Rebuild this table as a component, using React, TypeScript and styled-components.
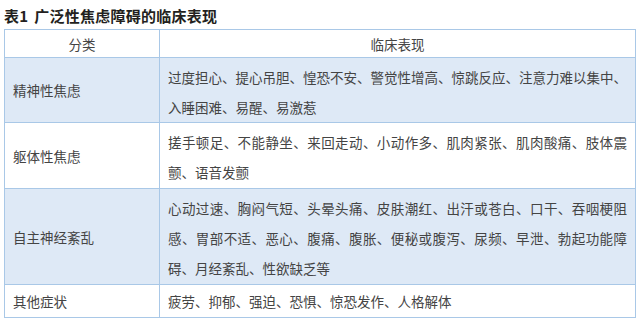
import React from 'react';
import styled, { createGlobalStyle } from 'styled-components';

const GlobalStyle = createGlobalStyle`
  html, body {
    margin: 0;
    padding: 0;
    background: #ffffff;
  }
  body {
    font-family: "Noto Sans CJK SC", "Noto Sans", sans-serif;
  }
`;

const Page = styled.div`
  width: 640px;
  padding: 6px 4px 0 4px;
  box-sizing: border-box;
`;

const Caption = styled.h1`
  margin: 0 0 4px 0;
  font-size: 15px;
  line-height: 19px;
  font-weight: 700;
  color: #231f20;
  letter-spacing: 0.25px;
  span {
    margin-right: 6px;
  }
`;

const Table = styled.table`
  width: 632px;
  border-collapse: collapse;
  table-layout: fixed;
  border: 1px solid #a9c8e7;
  font-size: 13.5px;
  color: #444444;
`;

const Row = styled.tr<{ $shade?: boolean; $h: number }>`
  height: ${p => p.$h}px;
  background: ${p => (p.$shade ? '#dee9f6' : '#ffffff')};
`;

const HeadCell = styled.th`
  font-weight: 400;
  text-align: center;
  border: 1px solid #a9c8e7;
  padding: 0;
  line-height: 26px;
`;

const KindCell = styled.td`
  width: 146px;
  border: 1px solid #a9c8e7;
  padding: 0 0 0 8px;
  vertical-align: middle;
`;

const SignCell = styled.td<{ $single?: boolean }>`
  border: 1px solid #a9c8e7;
  padding: ${p => (p.$single ? '0 8px' : '4px 8px 0 8px')};
  vertical-align: ${p => (p.$single ? 'middle' : 'top')};
  line-height: 30px;
`;

const Line = styled.span<{ $last?: boolean }>`
  display: block;
  text-align: justify;
  text-align-last: ${p => (p.$last ? 'left' : 'justify')};
  white-space: nowrap;
`;

const rows = [
  {
    kind: '精神性焦虑',
    shade: true,
    h: 63,
    lines: [
      '过度担心、提心吊胆、惶恐不安、警觉性增高、惊跳反应、注意力难以集中、',
      '入睡困难、易醒、易激惹',
    ],
  },
  {
    kind: '躯体性焦虑',
    shade: false,
    h: 66,
    lines: [
      '搓手顿足、不能静坐、来回走动、小动作多、肌肉紧张、肌肉酸痛、肢体震',
      '颤、语音发颤',
    ],
  },
  {
    kind: '自主神经紊乱',
    shade: true,
    h: 96,
    lines: [
      '心动过速、胸闷气短、头晕头痛、皮肤潮红、出汗或苍白、口干、吞咽梗阻',
      '感、胃部不适、恶心、腹痛、腹胀、便秘或腹泻、尿频、早泄、勃起功能障',
      '碍、月经紊乱、性欲缺乏等',
    ],
  },
  {
    kind: '其他症状',
    shade: false,
    h: 33,
    lines: ['疲劳、抑郁、强迫、恐惧、惊恐发作、人格解体'],
  },
];

const App = () => {
  return (
    <Page>
      <GlobalStyle />
      <Caption>
        <span>表1</span>广泛性焦虑障碍的临床表现
      </Caption>
      <Table>
        <colgroup>
          <col style={{ width: 155 }} />
          <col />
        </colgroup>
        <thead>
          <Row $h={28}>
            <HeadCell>分类</HeadCell>
            <HeadCell>临床表现</HeadCell>
          </Row>
        </thead>
        <tbody>
          {rows.map(r => (
            <Row key={r.kind} $shade={r.shade} $h={r.h}>
              <KindCell>{r.kind}</KindCell>
              <SignCell $single={r.lines.length === 1}>
                {r.lines.map((l, i) => (
                  <Line key={l} $last={i === r.lines.length - 1}>
                    {l}
                  </Line>
                ))}
              </SignCell>
            </Row>
          ))}
        </tbody>
      </Table>
    </Page>
  );
};

export default App;
